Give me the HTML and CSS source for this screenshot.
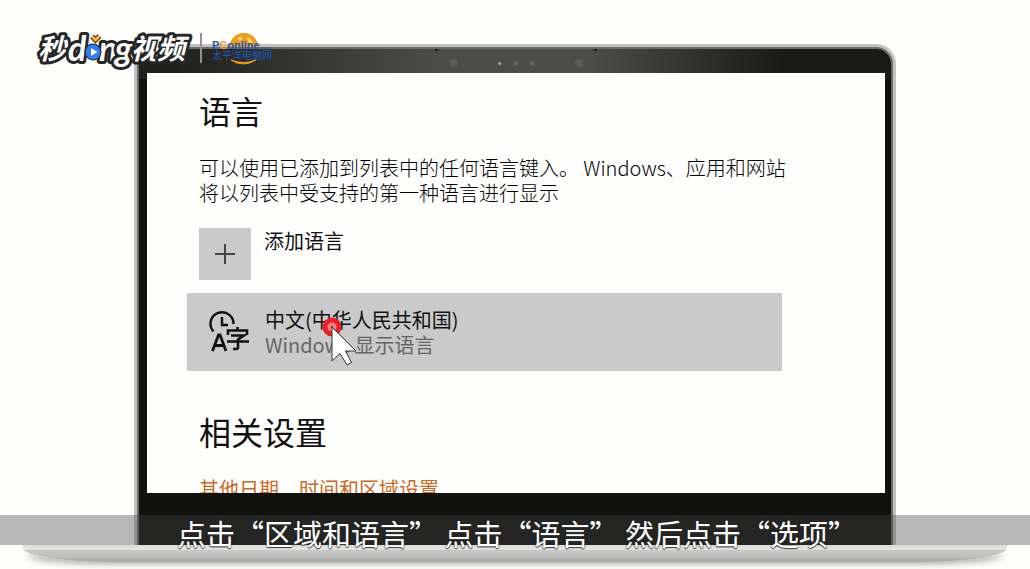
FILE: index.html
```html
<!DOCTYPE html>
<html lang="zh-CN">
<head>
    <meta charset="UTF-8">
    <meta name="viewport" content="width=device-width, initial-scale=1.0">
    <title>语言设置</title>
    <link rel="stylesheet" href="styles.css">
</head>

<body>
    <div class="stage">
        <div class="laptop-lid">
            <div class="bezel">
                <div class="camera">
                    <span class="mic"></span>
                    <span class="led"></span>
                    <span class="lens"></span>
                    <span class="lens"></span>
                    <span class="mic"></span>
                </div>

                <main class="screen">
                    <h1>语言</h1>
                    <p class="description">可以使用已添加到列表中的任何语言键入。 Windows、应用和网站<br>将以列表中受支持的第一种语言进行显示</p>

                    <button type="button" class="add-language">
                        <span class="plus">
                            <svg width="22" height="22" viewBox="0 0 22 22" aria-hidden="true">
                                <path d="M11 1V21M1 11H21" stroke="#444" stroke-width="2"/>
                            </svg>
                        </span>
                        <span class="add-text">添加语言</span>
                    </button>

                    <button type="button" class="language">
                        <svg class="language-icon" width="42" height="44" viewBox="0 0 42 44" aria-hidden="true">
                            <path d="M4.500 21.500A11.500 11.500 0 1 1 24.500 14" fill="none" stroke="#111" stroke-width="2.400"/>
                            <path d="M13 7V15H19" fill="none" stroke="#111" stroke-width="2.400"/>
                            <path d="M3.500 41L9.500 25H11L17 41M5.500 35.500H15" fill="none" stroke="#111" stroke-width="2.800"/>
                            <path d="M19 25V20.500H38V25M28.500 17V20.500M22 25.500H35L29 29.500V37.500Q29 39 27 39H24M18 31.500H40" fill="none" stroke="#111" stroke-width="2.600"/>
                        </svg>
                        <span class="language-text">
                            <span class="language-name">中文(中华人民共和国)</span>
                            <span class="language-note">Windows 显示语言</span>
                        </span>
                        <svg class="pointer" width="40" height="52" viewBox="0 0 40 52" aria-hidden="true">
                            <circle cx="12" cy="12" r="7" fill="#f58080" stroke="#ec2028" stroke-width="5"/>
                            <path d="M12 12V46L20 38.500L27 50L31.500 47.500L25.500 36H36Z" fill="#fff" stroke="#333" stroke-width="1"/>
                            <circle cx="12" cy="12" r="1" fill="#333"/>
                        </svg>
                    </button>

                    <h2>相关设置</h2>
                    <a href="#" class="related">其他日期、时间和区域设置</a>
                </main>
            </div>
        </div>
        <div class="laptop-base"></div>

        <div class="brand">
            <svg width="154" height="44" viewBox="0 0 154 44" role="img" aria-label="秒dong视频">
                <g class="brand-text">
                    <text x="1" y="26" class="brand-cjk">秒</text>
                    <text x="31" y="28" class="brand-latin">d</text>
                    <text x="62" y="28" class="brand-latin">n</text>
                    <text x="78" y="28" class="brand-latin">g</text>
                    <text x="94" y="26" class="brand-cjk">视</text>
                    <text x="120" y="26" class="brand-cjk">频</text>
                </g>
                <circle cx="56" cy="19" r="8.500" fill="#262626"/>
                <circle cx="56" cy="19" r="7.500" fill="#2f7df0"/>
                <path d="M54 15L60.500 19L54 23Z" fill="#fff"/>
                <path d="M55 3.500L58.500 7L62.500 3" fill="none" stroke="#262626" stroke-width="5"/>
                <path d="M55 3.500L58.500 7L62.500 3" fill="none" stroke="#f8b72a" stroke-width="3"/>
            </svg>
            <span class="divider"></span>
            <svg width="70" height="36" viewBox="0 0 70 36" role="img" aria-label="PConline 太平洋电脑网">
                <path d="M18 14C20 5 25 0 33 0C41 0 46 6 48 14Z" fill="#f29a1c"/>
                <path d="M26 5L30 3L32 6L28 8ZM35 4L40 6L42 11L37 9Z" fill="#ffcf70"/>
                <path d="M20 27Q32 35 45 27Q33 32 20 27Z" fill="#f29a1c" stroke="#f29a1c"/>
                <text x="1" y="16" class="pc-name">P<tspan fill="#f29a1c">C</tspan>online</text>
                <path d="M50 15H62" stroke="#1c5bb5" stroke-width="1" stroke-dasharray="2 1"/>
                <text x="1" y="26" class="pc-cjk">太平洋电脑网</text>
            </svg>
        </div>

        <p class="caption">点击“区域和语言” 点击“语言” 然后点击“选项”</p>
    </div>
</body>
</html>
```

FILE: styles.css
```css
* {
    box-sizing: border-box;
}

body {
    margin: 0;
    background-color: #fefefd;
    color: #111;
    font-family: "Noto Sans CJK SC", "Noto Sans", sans-serif;
}

.stage {
    position: relative;
    display: flex;
    flex-direction: column;
    height: 100vh;
    min-height: 400px;
    padding: 44px 0 7px;
    overflow: hidden;
}

/* laptop */
.laptop-lid {
    display: flex;
    flex: 1;
    min-height: 0;
    margin: 0 13%;
    padding: 3px 3px 0;
    border-radius: 20px 20px 0 0;
    background-color: #c2c2c1;
}

.bezel {
    display: flex;
    flex: 1;
    flex-direction: column;
    min-width: 0;
    padding: 0 6px 52px 8px;
    border: 2px solid #6b6b69;
    border-bottom: 0;
    border-radius: 17px 17px 0 0;
    background: linear-gradient(90deg, #20201e 5%, #4c4c4a 40%, #4c4c4a 60%, #191917 86%) top / 100% 30px no-repeat #11110f;
}

.camera {
    position: relative;
    display: flex;
    flex: none;
    align-items: center;
    justify-content: center;
    gap: 12px;
    height: 24px;
    padding-top: 4px;
}

/* hinge gaps on the top edge */
.camera::before,
.camera::after {
    content: "";
    position: absolute;
    top: 0;
    width: 3px;
    height: 2px;
    background-color: #1a1a18;
}

.camera::before {
    left: 39%;
}

.camera::after {
    right: 39%;
}

.mic {
    width: 8px;
    height: 8px;
    margin: 0 28px;
    border-radius: 50%;
    background-color: #5a5a58;
}

.led {
    width: 3px;
    height: 3px;
    border-radius: 50%;
    background-color: #a5aaa8;
}

.lens {
    width: 5px;
    height: 5px;
    border-radius: 50%;
    background-color: #626462;
}

.laptop-base {
    flex: none;
    height: 17px;
    margin: 0 23px;
    border-radius: 0 0 90px 90px / 0 0 14px 14px;
    background: linear-gradient(#dededd 3px, #f2f2f1 4px, #c9c9c8 5px, #bdbdbc 12px, #a3a3a2);
    box-shadow: 0 6px 6px -4px #aaa;
}

/* settings page */
.screen {
    flex: 1;
    min-height: 0;
    padding: 17px 14% 0 40px;
    overflow: hidden;
    background-color: #fefefd;
}

h1,
h2 {
    margin: 0;
    padding-left: 12px;
    font-size: 32px;
    font-weight: 400;
    line-height: 40px;
}

.description {
    margin: 25px 0 23px;
    padding-left: 12px;
    color: #000;
    font-size: 20px;
    font-weight: 300;
    line-height: 25px;
    white-space: nowrap;
}

button {
    display: flex;
    width: 100%;
    border: 0;
    background-color: transparent;
    color: #111;
    font-family: inherit;
    font-size: 20px;
    line-height: 25px;
    text-align: left;
    cursor: pointer;
}

.add-language {
    gap: 13px;
    padding: 0 12px;
}

.plus {
    display: flex;
    align-items: center;
    justify-content: center;
    width: 52px;
    height: 52px;
    background-color: #cacaca;
}

.language {
    position: relative;
    gap: 14px;
    margin: 13px 0 40px;
    padding: 14px 22px;
    background-color: #cacaca;
}

.language-icon {
    flex: none;
    margin-top: 3px;
}

.language-text {
    display: flex;
    flex-direction: column;
}

.language-note {
    color: #666;
}

.pointer {
    position: absolute;
    top: 22px;
    left: 133px;
}

.related {
    display: block;
    margin-top: 25px;
    padding-left: 12px;
    color: #c96a28;
    font-size: 20px;
    line-height: 25px;
    text-decoration: none;
}

/* logos over the video */
.brand {
    position: absolute;
    top: 33px;
    left: 37px;
    display: flex;
    gap: 9px;
}

.brand svg {
    overflow: visible;
}

.brand-text {
    fill: #fff;
    stroke: #262626;
    stroke-width: 6px;
    stroke-linejoin: round;
    paint-order: stroke;
    font-style: italic;
    font-weight: 700;
}

.brand-cjk {
    font-size: 28px;
}

.brand-latin {
    font-family: Lato, sans-serif;
    font-size: 34px;
}

.divider {
    width: 2px;
    height: 30px;
    background-color: #998f91;
}

.pc-name {
    fill: #1c5bb5;
    font-family: "Liberation Sans", sans-serif;
    font-size: 11px;
    font-weight: 700;
}

.pc-cjk {
    fill: #1c5bb5;
    font-size: 10px;
}

/* subtitle bar */
.caption {
    position: absolute;
    right: 0;
    bottom: 24px;
    left: 0;
    height: 30px;
    margin: 0;
    padding-left: 4px;
    background-color: rgba(72, 72, 70, 0.38);
    color: #fff;
    font-size: 29px;
    line-height: 36px;
    text-align: center;
    text-shadow: 0 0 2px #222, 0 1px 1px #444;
    white-space: nowrap;
}
```
